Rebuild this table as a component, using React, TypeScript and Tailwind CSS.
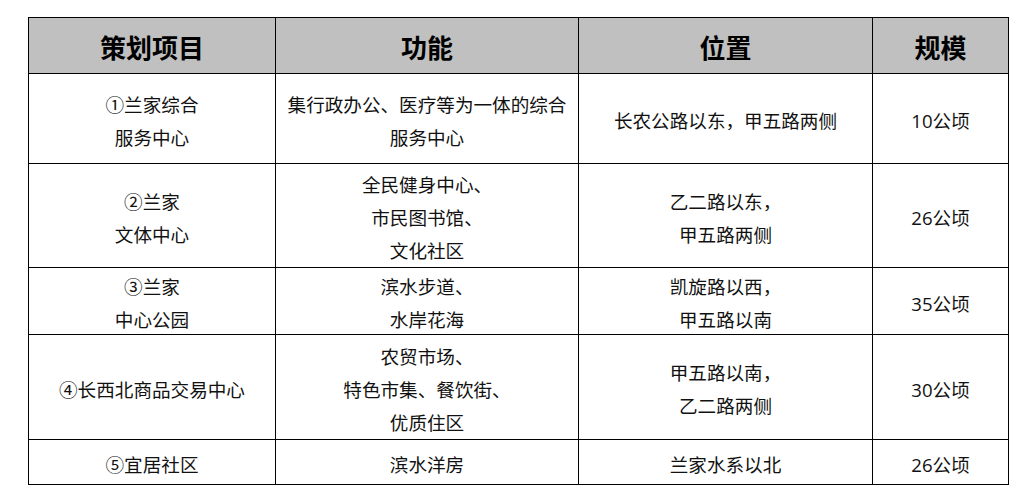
import React from "react";

const font = { fontFamily: '"Open Sans", "Noto Sans CJK SC", sans-serif' };

type Row = { h: string; cells: string[][] };

const rows: Row[] = [
  {
    h: "h-[90px]",
    cells: [["①兰家综合", "服务中心"], ["集行政办公、医疗等为一体的综合", "服务中心"], ["长农公路以东，甲五路两侧"], ["10公顷"]],
  },
  {
    h: "h-[104px]",
    cells: [["②兰家", "文体中心"], ["全民健身中心、", "市民图书馆、", "文化社区"], ["乙二路以东，", "甲五路两侧"], ["26公顷"]],
  },
  {
    h: "h-[67px]",
    cells: [["③兰家", "中心公园"], ["滨水步道、", "水岸花海"], ["凯旋路以西，", "甲五路以南"], ["35公顷"]],
  },
  {
    h: "h-[105px]",
    cells: [["④长西北商品交易中心"], ["农贸市场、", "特色市集、餐饮街、", "优质住区"], ["甲五路以南，", "乙二路两侧"], ["30公顷"]],
  },
  {
    h: "h-[45px]",
    cells: [["⑤宜居社区"], ["滨水洋房"], ["兰家水系以北"], ["26公顷"]],
  },
];

export default function App() {
  return (
    <div className="w-[1030px] h-[504px] bg-white overflow-hidden pt-[17px] pl-[28px]" style={font}>
      <table className="table-fixed border-collapse text-[#111]">
        <colgroup>
          <col className="w-[247px]" />
          <col className="w-[303px]" />
          <col className="w-[294px]" />
          <col className="w-[136px]" />
        </colgroup>
        <thead>
          <tr className="h-[56px] bg-[#c0c0c0]">
            {["策划项目", "功能", "位置", "规模"].map((t) => (
              <th key={t} className="border border-black p-0 pt-[5px] text-[26px] font-bold leading-none text-center text-black">
                {t}
              </th>
            ))}
          </tr>
        </thead>
        <tbody>
          {rows.map((r, i) => (
            <tr key={i} className={r.h}>
              {r.cells.map((c, j) => (
                <td key={j} className="border border-black p-0 text-center text-[18.6px] leading-[33px] align-middle">
                  <div className="translate-y-[2px]">
                    {c.map((l, k) => (
                      <div key={k}>{l}</div>
                    ))}
                  </div>
                </td>
              ))}
            </tr>
          ))}
        </tbody>
      </table>
    </div>
  );
}
